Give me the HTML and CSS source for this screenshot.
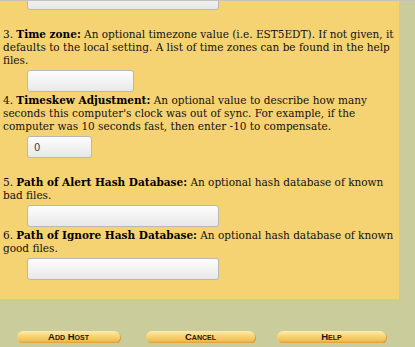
FILE: index.html
```html
<!DOCTYPE html>
<html>
<head>
  <title>Add Host</title>
  <link rel="stylesheet" href="styles.css">
</head>
<body>
  <div class="panel">
    <div class="field first"><input type="text" class="wide"></div>

    <p class="item">3. <b>Time zone:</b> An optional timezone value (i.e. EST5EDT). If not given, it defaults to the local setting. A list of time zones can be found in the help files.</p>
    <div class="field"><input type="text" class="mid"></div>

    <p class="item tight">4. <b>Timeskew Adjustment:</b> An optional value to describe how many seconds this computer's clock was out of sync. For example, if the computer was 10 seconds fast, then enter -10 to compensate.</p>
    <div class="field"><input type="text" class="small" value="0"></div>

    <p class="item">5. <b>Path of Alert Hash Database:</b> An optional hash database of known bad files.</p>
    <div class="field"><input type="text" class="wide"></div>

    <p class="item tight">6. <b>Path of Ignore Hash Database:</b> An optional hash database of known good files.</p>
    <div class="field"><input type="text" class="wide"></div>
  </div>

  <div class="actions">
    <button class="add">Add Host</button>
    <button>Cancel</button>
    <button>Help</button>
  </div>
</body>
</html>
```

FILE: styles.css
```css
body {
  margin: 0;
  background-color: #cbcc9b;
  border-top: 1px solid #c4c4bc;
  font-family: "DejaVu Serif", serif;
  font-size: 10.5px;
  line-height: 13px;
  color: #111;
  overflow: hidden;
}
.panel {
  width: 393px;
  background-color: #f6d372;
  padding: 0 3px 19px 3px;
}
.item {
  margin: 18px 0 0 0;
}
.item.tight {
  margin-top: 2px;
}
.item b {
  font-weight: bold;
  color: #000;
}
.field {
  padding: 3px 0 0 24px;
}
.field.first {
  padding-top: 0;
  margin-top: -13px;
}
.field input {
  display: block;
  box-sizing: border-box;
  height: 22px;
  border: 1px solid #b9b9b4;
  border-radius: 3px;
  background: linear-gradient(#fdfdfd, #e8e8e8);
  font-family: "DejaVu Sans", sans-serif;
  font-size: 10px;
  color: #444;
  padding: 0 6px;
}
.field input.wide {
  width: 192px;
}
.field input.mid {
  width: 107px;
}
.field input.small {
  width: 65px;
}
.actions {
  display: flex;
  padding: 32px 0 0 17px;
  gap: 22px;
}
.actions button {
  width: 109px;
  height: 12px;
  padding: 0;
  border: none;
  border-radius: 6px;
  background: linear-gradient(#fcecb0 0%, #f8d676 40%, #f2c055 80%, #e29e38 100%);
  box-shadow: 1px 1px 0 #d99a3c;
  font-family: "Liberation Sans", Arial, sans-serif;
  font-size: 9.5px;
  font-weight: bold;
  font-variant: small-caps;
  line-height: 12px;
  color: #1a1a1a;
}
.actions button.add {
  width: 103px;
  margin-right: 4px;
}
```
